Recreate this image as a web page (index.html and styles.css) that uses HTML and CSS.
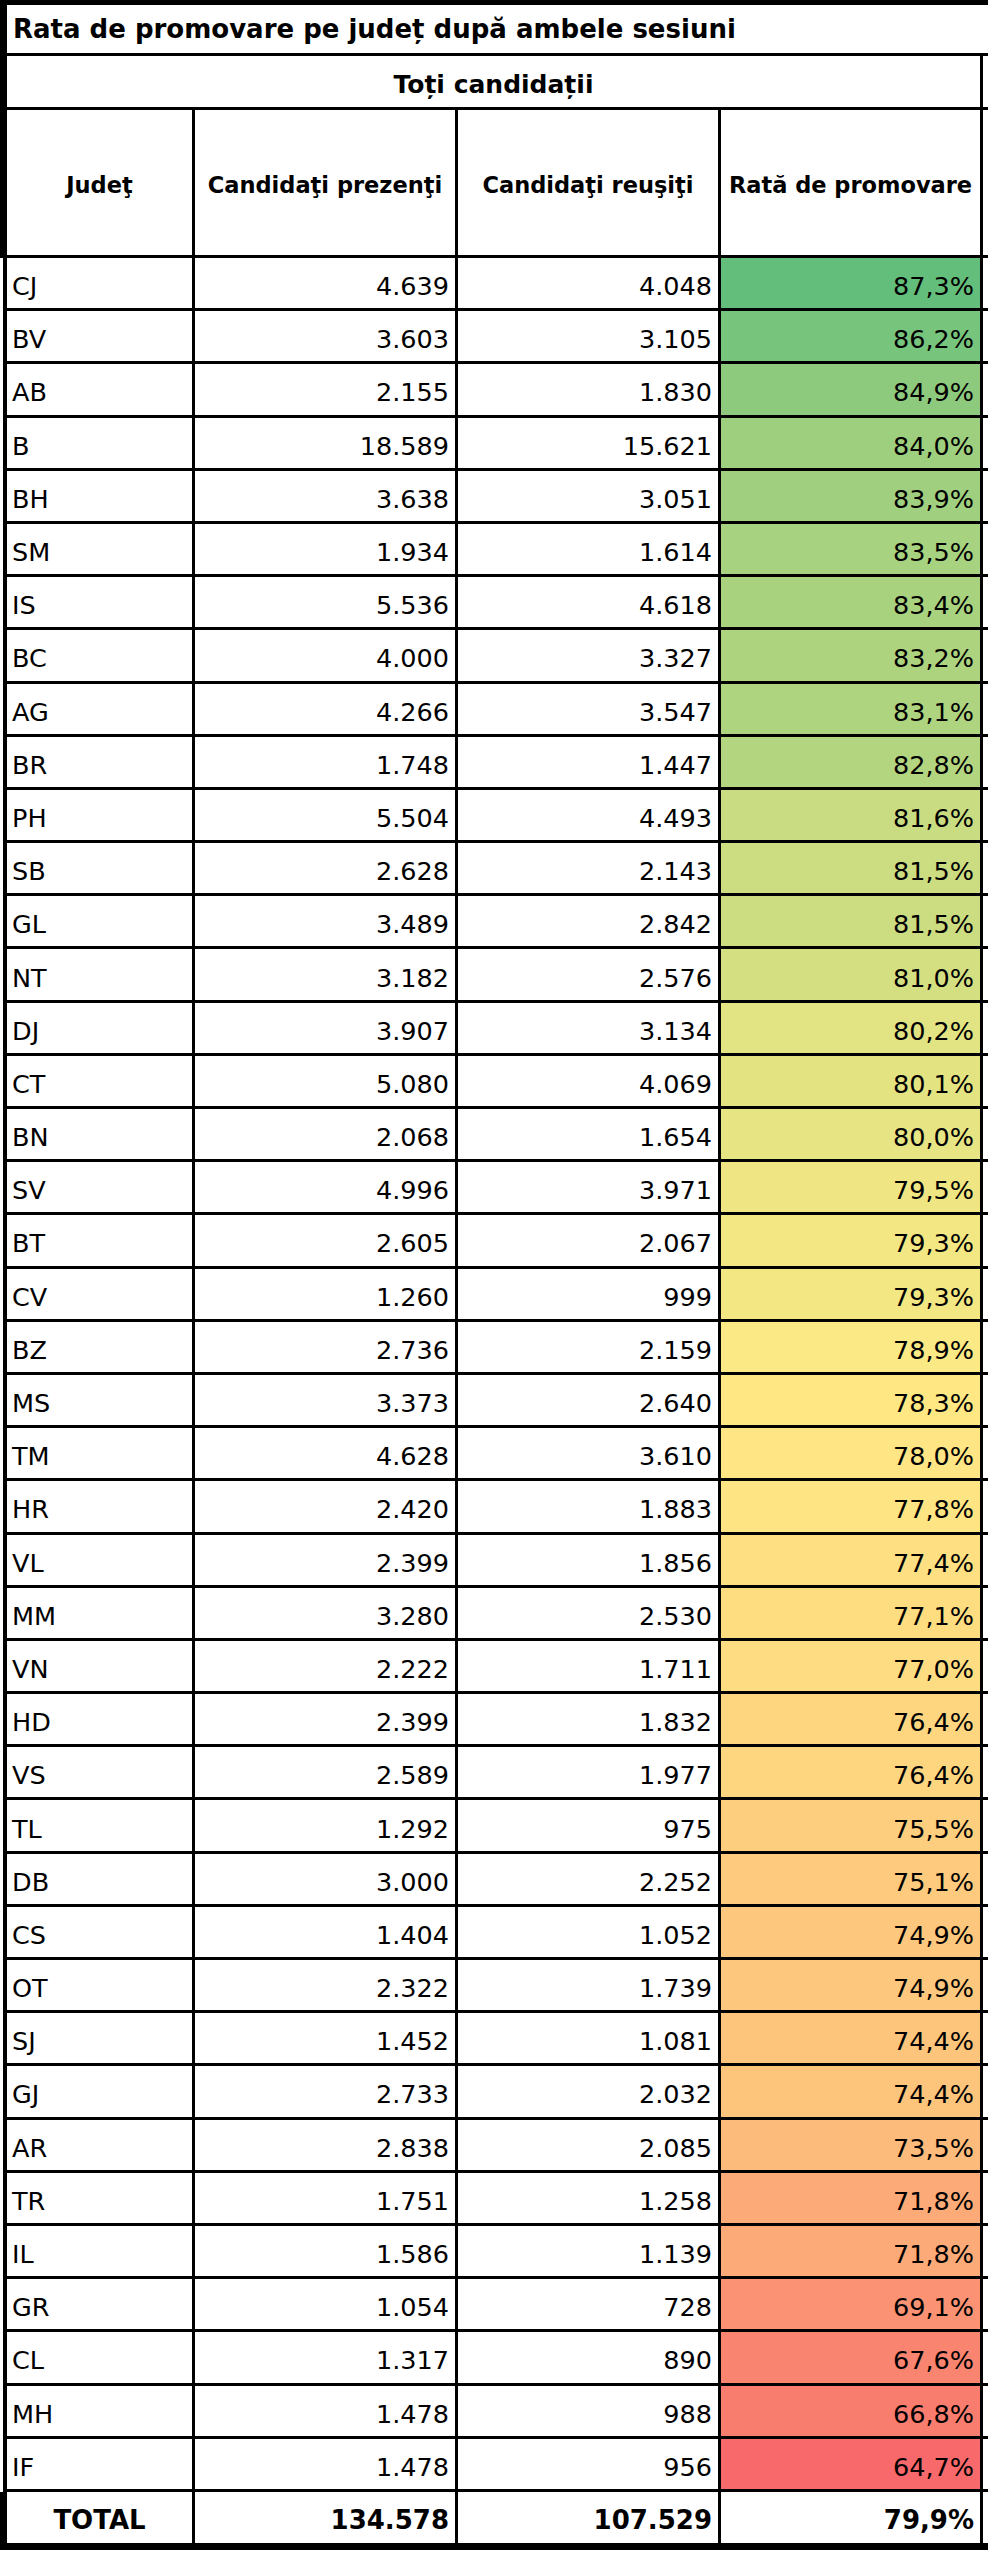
FILE: index.html
```html
<!DOCTYPE html>
<html lang="ro">
<head>
<meta charset="utf-8">
<title>Rata de promovare pe județ</title>
<link rel="stylesheet" href="styles.css">
</head>
<body>
<div class="sheet">
  <div class="title">Rata de promovare pe județ după ambele sesiuni</div>
  <div class="subtitle"><div class="subtitle-cell">Toți candidații</div><div class="tail"></div></div>
  <div class="head">
    <div class="cell c1">Judeţ</div>
    <div class="cell c2">Candidaţi prezenţi</div>
    <div class="cell c3">Candidaţi reuşiţi</div>
    <div class="cell c4">Rată de promovare</div>
    <div class="tail"></div>
  </div>
  <div class="row"><div class="cell c1">CJ</div><div class="cell c2">4.639</div><div class="cell c3">4.048</div><div class="cell c4" style="background:rgb(99,190,123)">87,3%</div></div>
  <div class="row"><div class="cell c1">BV</div><div class="cell c2">3.603</div><div class="cell c3">3.105</div><div class="cell c4" style="background:rgb(119,196,124)">86,2%</div></div>
  <div class="row"><div class="cell c1">AB</div><div class="cell c2">2.155</div><div class="cell c3">1.830</div><div class="cell c4" style="background:rgb(142,202,125)">84,9%</div></div>
  <div class="row"><div class="cell c1">B</div><div class="cell c2">18.589</div><div class="cell c3">15.621</div><div class="cell c4" style="background:rgb(158,207,126)">84,0%</div></div>
  <div class="row"><div class="cell c1">BH</div><div class="cell c2">3.638</div><div class="cell c3">3.051</div><div class="cell c4" style="background:rgb(160,208,127)">83,9%</div></div>
  <div class="row"><div class="cell c1">SM</div><div class="cell c2">1.934</div><div class="cell c3">1.614</div><div class="cell c4" style="background:rgb(167,210,127)">83,5%</div></div>
  <div class="row"><div class="cell c1">IS</div><div class="cell c2">5.536</div><div class="cell c3">4.618</div><div class="cell c4" style="background:rgb(169,210,127)">83,4%</div></div>
  <div class="row"><div class="cell c1">BC</div><div class="cell c2">4.000</div><div class="cell c3">3.327</div><div class="cell c4" style="background:rgb(173,211,127)">83,2%</div></div>
  <div class="row"><div class="cell c1">AG</div><div class="cell c2">4.266</div><div class="cell c3">3.547</div><div class="cell c4" style="background:rgb(174,212,127)">83,1%</div></div>
  <div class="row"><div class="cell c1">BR</div><div class="cell c2">1.748</div><div class="cell c3">1.447</div><div class="cell c4" style="background:rgb(180,213,128)">82,8%</div></div>
  <div class="row"><div class="cell c1">PH</div><div class="cell c2">5.504</div><div class="cell c3">4.493</div><div class="cell c4" style="background:rgb(201,220,129)">81,6%</div></div>
  <div class="row"><div class="cell c1">SB</div><div class="cell c2">2.628</div><div class="cell c3">2.143</div><div class="cell c4" style="background:rgb(203,220,129)">81,5%</div></div>
  <div class="row"><div class="cell c1">GL</div><div class="cell c2">3.489</div><div class="cell c3">2.842</div><div class="cell c4" style="background:rgb(203,220,129)">81,5%</div></div>
  <div class="row"><div class="cell c1">NT</div><div class="cell c2">3.182</div><div class="cell c3">2.576</div><div class="cell c4" style="background:rgb(212,223,130)">81,0%</div></div>
  <div class="row"><div class="cell c1">DJ</div><div class="cell c2">3.907</div><div class="cell c3">3.134</div><div class="cell c4" style="background:rgb(226,227,130)">80,2%</div></div>
  <div class="row"><div class="cell c1">CT</div><div class="cell c2">5.080</div><div class="cell c3">4.069</div><div class="cell c4" style="background:rgb(228,227,130)">80,1%</div></div>
  <div class="row"><div class="cell c1">BN</div><div class="cell c2">2.068</div><div class="cell c3">1.654</div><div class="cell c4" style="background:rgb(230,228,131)">80,0%</div></div>
  <div class="row"><div class="cell c1">SV</div><div class="cell c2">4.996</div><div class="cell c3">3.971</div><div class="cell c4" style="background:rgb(239,230,131)">79,5%</div></div>
  <div class="row"><div class="cell c1">BT</div><div class="cell c2">2.605</div><div class="cell c3">2.067</div><div class="cell c4" style="background:rgb(242,231,131)">79,3%</div></div>
  <div class="row"><div class="cell c1">CV</div><div class="cell c2">1.260</div><div class="cell c3">999</div><div class="cell c4" style="background:rgb(242,231,131)">79,3%</div></div>
  <div class="row"><div class="cell c1">BZ</div><div class="cell c2">2.736</div><div class="cell c3">2.159</div><div class="cell c4" style="background:rgb(250,233,132)">78,9%</div></div>
  <div class="row"><div class="cell c1">MS</div><div class="cell c2">3.373</div><div class="cell c3">2.640</div><div class="cell c4" style="background:rgb(255,232,131)">78,3%</div></div>
  <div class="row"><div class="cell c1">TM</div><div class="cell c2">4.628</div><div class="cell c3">3.610</div><div class="cell c4" style="background:rgb(255,229,131)">78,0%</div></div>
  <div class="row"><div class="cell c1">HR</div><div class="cell c2">2.420</div><div class="cell c3">1.883</div><div class="cell c4" style="background:rgb(255,228,131)">77,8%</div></div>
  <div class="row"><div class="cell c1">VL</div><div class="cell c2">2.399</div><div class="cell c3">1.856</div><div class="cell c4" style="background:rgb(254,224,130)">77,4%</div></div>
  <div class="row"><div class="cell c1">MM</div><div class="cell c2">3.280</div><div class="cell c3">2.530</div><div class="cell c4" style="background:rgb(254,221,129)">77,1%</div></div>
  <div class="row"><div class="cell c1">VN</div><div class="cell c2">2.222</div><div class="cell c3">1.711</div><div class="cell c4" style="background:rgb(254,220,129)">77,0%</div></div>
  <div class="row"><div class="cell c1">HD</div><div class="cell c2">2.399</div><div class="cell c3">1.832</div><div class="cell c4" style="background:rgb(254,214,128)">76,4%</div></div>
  <div class="row"><div class="cell c1">VS</div><div class="cell c2">2.589</div><div class="cell c3">1.977</div><div class="cell c4" style="background:rgb(254,214,128)">76,4%</div></div>
  <div class="row"><div class="cell c1">TL</div><div class="cell c2">1.292</div><div class="cell c3">975</div><div class="cell c4" style="background:rgb(253,206,126)">75,5%</div></div>
  <div class="row"><div class="cell c1">DB</div><div class="cell c2">3.000</div><div class="cell c3">2.252</div><div class="cell c4" style="background:rgb(253,202,126)">75,1%</div></div>
  <div class="row"><div class="cell c1">CS</div><div class="cell c2">1.404</div><div class="cell c3">1.052</div><div class="cell c4" style="background:rgb(253,200,125)">74,9%</div></div>
  <div class="row"><div class="cell c1">OT</div><div class="cell c2">2.322</div><div class="cell c3">1.739</div><div class="cell c4" style="background:rgb(253,200,125)">74,9%</div></div>
  <div class="row"><div class="cell c1">SJ</div><div class="cell c2">1.452</div><div class="cell c3">1.081</div><div class="cell c4" style="background:rgb(253,196,124)">74,4%</div></div>
  <div class="row"><div class="cell c1">GJ</div><div class="cell c2">2.733</div><div class="cell c3">2.032</div><div class="cell c4" style="background:rgb(253,196,124)">74,4%</div></div>
  <div class="row"><div class="cell c1">AR</div><div class="cell c2">2.838</div><div class="cell c3">2.085</div><div class="cell c4" style="background:rgb(252,187,123)">73,5%</div></div>
  <div class="row"><div class="cell c1">TR</div><div class="cell c2">1.751</div><div class="cell c3">1.258</div><div class="cell c4" style="background:rgb(252,171,120)">71,8%</div></div>
  <div class="row"><div class="cell c1">IL</div><div class="cell c2">1.586</div><div class="cell c3">1.139</div><div class="cell c4" style="background:rgb(252,171,120)">71,8%</div></div>
  <div class="row"><div class="cell c1">GR</div><div class="cell c2">1.054</div><div class="cell c3">728</div><div class="cell c4" style="background:rgb(250,146,115)">69,1%</div></div>
  <div class="row"><div class="cell c1">CL</div><div class="cell c2">1.317</div><div class="cell c3">890</div><div class="cell c4" style="background:rgb(249,132,112)">67,6%</div></div>
  <div class="row"><div class="cell c1">MH</div><div class="cell c2">1.478</div><div class="cell c3">988</div><div class="cell c4" style="background:rgb(249,125,111)">66,8%</div></div>
  <div class="row"><div class="cell c1">IF</div><div class="cell c2">1.478</div><div class="cell c3">956</div><div class="cell c4" style="background:rgb(248,105,107)">64,7%</div></div>
  <div class="total">
    <div class="cell c1">TOTAL</div>
    <div class="cell c2">134.578</div>
    <div class="cell c3">107.529</div>
    <div class="cell c4">79,9%</div>
  </div>
</div>
</body>
</html>
```

FILE: styles.css
```css
html, body {
  margin: 0;
  padding: 0;
  background: #ffffff;
}

.sheet {
  width: 988px;
  font-family: "DejaVu Sans", Verdana, sans-serif;
  color: #000;
}

.title {
  box-sizing: border-box;
  height: 56px;
  border-top: 5px solid #000;
  border-left: 7px solid #000;
  border-bottom: 3px solid #000;
  padding-left: 6px;
  display: flex;
  align-items: center;
  font-weight: bold;
  font-size: 26px;
  white-space: nowrap;
}

.subtitle {
  box-sizing: border-box;
  height: 54px;
  border-left: 7px solid #000;
  border-bottom: 3px solid #000;
  display: flex;
}

.subtitle-cell {
  box-sizing: border-box;
  width: 976px;
  border-right: 3px solid #000;
  display: flex;
  align-items: center;
  justify-content: center;
  padding-top: 5px;
  font-weight: bold;
  font-size: 25px;
}

.tail {
  flex: 1;
}

.head {
  box-sizing: border-box;
  height: 148px;
  border-left: 7px solid #000;
  border-bottom: 3px solid #000;
  display: flex;
  font-weight: bold;
  font-size: 22.5px;
}

.cell {
  box-sizing: border-box;
  border-right: 3px solid #000;
  display: flex;
  align-items: center;
  white-space: nowrap;
}

.c1 { width: 188px; }
.c2 { width: 263px; }
.c3 { width: 263px; }
.c4 { width: 262px; }

.head .cell {
  justify-content: center;
  padding-top: 4px;
}

.row {
  box-sizing: border-box;
  height: 53.2px;
  margin-left: 3px;
  border-left: 4px solid #000;
  border-bottom: 3px solid #000;
  display: flex;
  font-size: 25.5px;
}

.row .cell {
  padding-top: 6px;
  padding-right: 6px;
  justify-content: flex-end;
}

.row .c1 {
  justify-content: flex-start;
  padding-left: 5px;
}

.total {
  box-sizing: border-box;
  height: 58px;
  border-left: 7px solid #000;
  border-bottom: 7px solid #000;
  display: flex;
  font-weight: bold;
  font-size: 26px;
}

.total .cell {
  padding-top: 5px;
  padding-right: 6px;
  justify-content: flex-end;
}

.total .c1 {
  justify-content: center;
  padding-right: 0;
}
```
